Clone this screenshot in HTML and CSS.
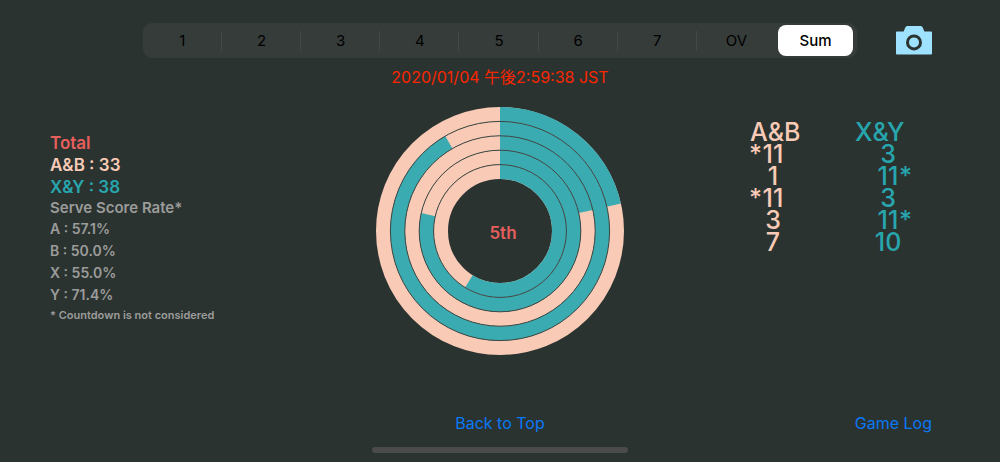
FILE: index.html
```html
<!DOCTYPE html>
<html lang="en">
<head>
<meta charset="utf-8">
<meta name="viewport" content="width=device-width, initial-scale=1">
<title>Match Summary</title>
<link rel="stylesheet" href="styles.css">
</head>
<body>
<header class="topbar">
  <fieldset class="segments" aria-label="Game">
    <label class="segment"><input type="radio" name="game"><span>1</span></label>
    <label class="segment"><input type="radio" name="game"><span>2</span></label>
    <label class="segment"><input type="radio" name="game"><span>3</span></label>
    <label class="segment"><input type="radio" name="game"><span>4</span></label>
    <label class="segment"><input type="radio" name="game"><span>5</span></label>
    <label class="segment"><input type="radio" name="game"><span>6</span></label>
    <label class="segment"><input type="radio" name="game"><span>7</span></label>
    <label class="segment"><input type="radio" name="game"><span>OV</span></label>
    <label class="segment"><input type="radio" name="game" checked><span>Sum</span></label>
  </fieldset>
  <button class="camera" type="button" aria-label="Take a picture">
    <svg width="36" height="29" viewBox="0 0 36 29" aria-hidden="true">
      <path fill="#9ee2ff" d="M1 5.600H7.600L9.300 1.500Q9.800 0 11.300 0h13.400Q26.200 0 26.700 1.500L28.400 5.600H35Q36 5.600 36 6.600v20.900Q36 28.500 35 28.500H1Q0 28.500 0 27.500V6.600Q0 5.600 1 5.600z"/>
      <circle cx="18" cy="16.400" r="6.500" fill="none" stroke="#2b3331" stroke-width="3"/>
    </svg>
  </button>
</header>
<time class="stamp" datetime="2020-01-04T14:59:38+09:00">2020/01/04 午後2:59:38 JST</time>
<main class="summary">
  <section class="totals">
    <h1 class="total-title">Total</h1>
    <p class="total ab">A&amp;B : 33</p>
    <p class="total xy">X&amp;Y : 38</p>
    <h2 class="rate-title">Serve Score Rate*</h2>
    <p class="rate">A : 57.1%</p>
    <p class="rate">B : 50.0%</p>
    <p class="rate">X : 55.0%</p>
    <p class="rate">Y : 71.4%</p>
    <p class="note">* Countdown is not considered</p>
  </section>
  <div class="chart">
    <svg class="rings" viewBox="-124 -124 248 248" role="img" aria-label="Share of points in each game">
      <g fill="none" stroke-width="14.400" transform="rotate(-90)">
        <g stroke="#f9cbb6">
          <circle r="116.800"/><circle r="102.400"/><circle r="88"/><circle r="73.600"/><circle r="59.200"/>
        </g>
        <g stroke="#3babb2">
          <circle r="116.800" pathLength="14" stroke-dasharray="3 14"/>
          <circle r="102.400" pathLength="12" stroke-dasharray="11 12"/>
          <circle r="88" pathLength="14" stroke-dasharray="3 14"/>
          <circle r="73.600" pathLength="14" stroke-dasharray="11 14"/>
          <circle r="59.200" pathLength="17" stroke-dasharray="10 17"/>
        </g>
        <g stroke="#3c4643" stroke-width="1">
          <circle r="109.600"/><circle r="95.200"/><circle r="80.800"/><circle r="66.400"/>
        </g>
      </g>
    </svg>
    <span class="chart-label">5th</span>
  </div>
  <table class="scores">
    <thead>
      <tr><th class="ab" scope="col">A&amp;B</th><th class="xy" scope="col">X&amp;Y</th></tr>
    </thead>
    <tbody>
      <tr><td class="ab"><span class="score serve-left">11</span></td><td class="xy"><span class="score">3</span></td></tr>
      <tr><td class="ab"><span class="score">1</span></td><td class="xy"><span class="score serve-right">11</span></td></tr>
      <tr><td class="ab"><span class="score serve-left">11</span></td><td class="xy"><span class="score">3</span></td></tr>
      <tr><td class="ab"><span class="score">3</span></td><td class="xy"><span class="score serve-right">11</span></td></tr>
      <tr><td class="ab"><span class="score">7</span></td><td class="xy"><span class="score">10</span></td></tr>
    </tbody>
  </table>
</main>
<footer class="bottombar">
  <nav class="links">
    <a class="back" href="#top">Back to Top</a>
    <a class="log" href="#log">Game Log</a>
  </nav>
  <div class="home-indicator"></div>
</footer>
</body>
</html>
```
FILE: styles.css
```css
* {
  box-sizing: border-box;
}

body {
  margin: 0;
  min-height: 100vh;
  display: flex;
  flex-direction: column;
  background: #2b3331;
  color: #9b9c9a;
  font-family: Inter, "Noto Sans CJK JP", sans-serif;
}

h1, h2, p {
  margin: 0;
  font-weight: 600;
}

.ab {
  color: #f9cbb6;
}

.xy {
  color: #27a6ae;
}

.topbar {
  display: grid;
  grid-template-columns: 1fr 5fr 1fr;
  align-items: center;
  padding-top: 23px;
}

.segments {
  grid-column: 2;
  display: flex;
  margin: 0;
  padding: 2px 2px 2px 0;
  border: 0;
  border-radius: 9px;
  background: #363c3a;
}

.segment {
  flex: 1;
  position: relative;
  display: flex;
  padding: 0 2px;
  font-size: 15px;
  line-height: 31px;
  color: #000;
}

.segment:not(:nth-last-child(-n+2)) {
  background: linear-gradient(#434947, #434947) right center / 1px 20px no-repeat;
}

.segment input {
  position: absolute;
  inset: 0;
  margin: 0;
  opacity: 0;
}

.segment span {
  flex: 1;
  text-align: center;
  border-radius: 8px;
}

.segment input:checked + span {
  background: #fff;
  font-weight: 500;
}

.camera {
  justify-self: end;
  display: flex;
  margin-right: 68px;
  padding: 0;
  border: 0;
  background: none;
}

.stamp {
  margin-top: 7px;
  text-align: center;
  font-size: 16px;
  line-height: 24px;
  color: #fa2600;
}

.summary {
  display: grid;
  grid-template-columns: 1fr 248px 1fr;
  align-items: start;
  margin-top: 18px;
}

.totals {
  padding: 25px 0 0 50px;
}

.total-title,
.total {
  font-size: 17px;
  line-height: 22px;
}

.total-title,
.chart-label {
  color: #e65f5c;
}

.rate-title {
  font-size: 15px;
  line-height: 20px;
}

.rate {
  font-size: 14px;
  line-height: 22px;
}

.note {
  font-size: 11px;
  line-height: 18px;
}

.chart {
  display: grid;
  place-items: center;
}

.chart > * {
  grid-area: 1 / 1;
}

.rings {
  display: block;
  width: 100%;
}

.chart-label {
  padding: 4px 0 0 6px;
  font-size: 17px;
  font-weight: 600;
}

.scores {
  justify-self: end;
  width: 182px;
  margin: 14px 68px 0 0;
  border-collapse: collapse;
  table-layout: fixed;
  font-size: 25px;
  line-height: 22px;
}

.scores th,
.scores td {
  padding: 0;
  text-align: left;
  font-weight: 500;
}

.scores .ab {
  width: 105px;
}

.score {
  position: relative;
  display: flex;
  justify-content: center;
  width: 22px;
  margin-left: 12px;
}

.xy .score {
  margin-left: 22px;
}

.serve-left::before,
.serve-right::after {
  content: "*";
  position: absolute;
  top: 0;
}

.serve-left::before {
  right: 100%;
}

.serve-right::after {
  left: 100%;
}

.bottombar {
  margin-top: auto;
  padding-bottom: 9px;
}

.links {
  display: grid;
  grid-template-columns: 1fr auto 1fr;
  font-size: 16px;
  line-height: 24px;
}

.links a {
  color: #0a78f5;
  text-decoration: none;
}

.back {
  grid-column: 2;
}

.log {
  justify-self: end;
  margin-right: 68px;
}

.home-indicator {
  width: 256px;
  height: 6px;
  margin: 12px auto 0;
  border-radius: 3px;
  background: #4b4b4b;
}
```
